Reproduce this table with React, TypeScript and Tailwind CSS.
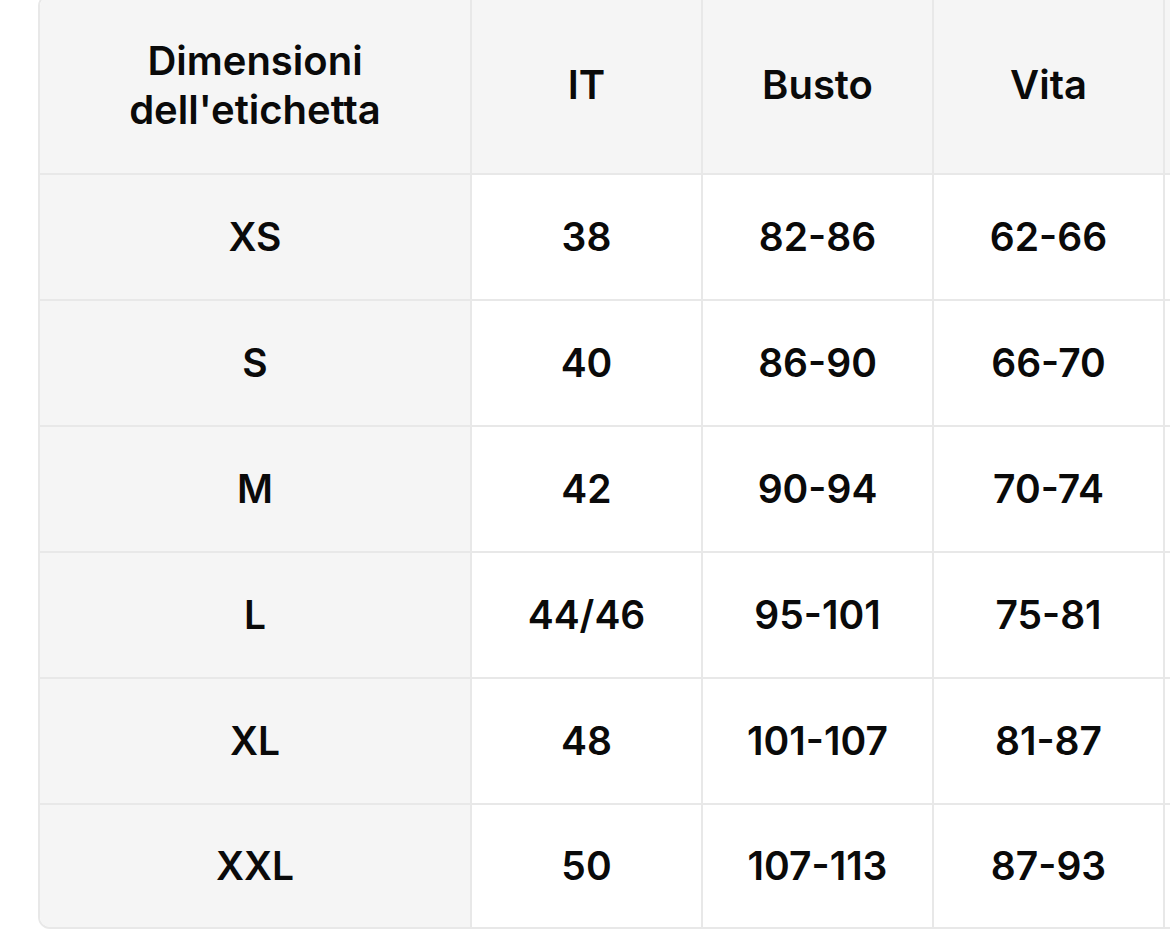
const headers = ["Dimensioni dell'etichetta", "IT", "Busto", "Vita", ""]

const rows = [
  ["XS", "38", "82-86", "62-66", ""],
  ["S", "40", "86-90", "66-70", ""],
  ["M", "42", "90-94", "70-74", ""],
  ["L", "44/46", "95-101", "75-81", ""],
  ["XL", "48", "101-107", "81-87", ""],
  ["XXL", "50", "107-113", "87-93", ""],
]

export default function App() {
  return (
    <div
      className="w-[1170px] h-[930px] overflow-hidden bg-white text-[#0a0a0a]"
      style={{ fontFamily: "Inter, 'Noto Sans', sans-serif" }}
    >
      <div className="ml-[38px] -mt-[6px] w-[1400px] rounded-xl border-2 border-[#e8e8e8] overflow-hidden">
        <div className="grid grid-cols-[432px_231px_231px_231px_231px]">
          {headers.map((h, i) => (
            <div
              key={i}
              className="h-[179px] flex items-center justify-center bg-[#f5f5f5] border-r-2 border-b-2 border-[#e8e8e8] px-4"
            >
              <span className={`text-[40px] leading-[49px] font-semibold text-center ${i === 0 ? "w-[300px]" : ""}`}>
                {h}
              </span>
            </div>
          ))}
          {rows.map((row, r) =>
            row.map((cell, c) => (
              <div
                key={`${r}-${c}`}
                className={`flex items-center justify-center border-r-2 border-[#e8e8e8] ${
                  r === rows.length - 1 ? "h-[122px]" : "h-[126px] border-b-2"
                } ${c === 0 ? "bg-[#f5f5f5]" : "bg-white"}`}
              >
                <span className="text-[39px] font-semibold">{cell}</span>
              </div>
            ))
          )}
        </div>
      </div>
    </div>
  )
}
